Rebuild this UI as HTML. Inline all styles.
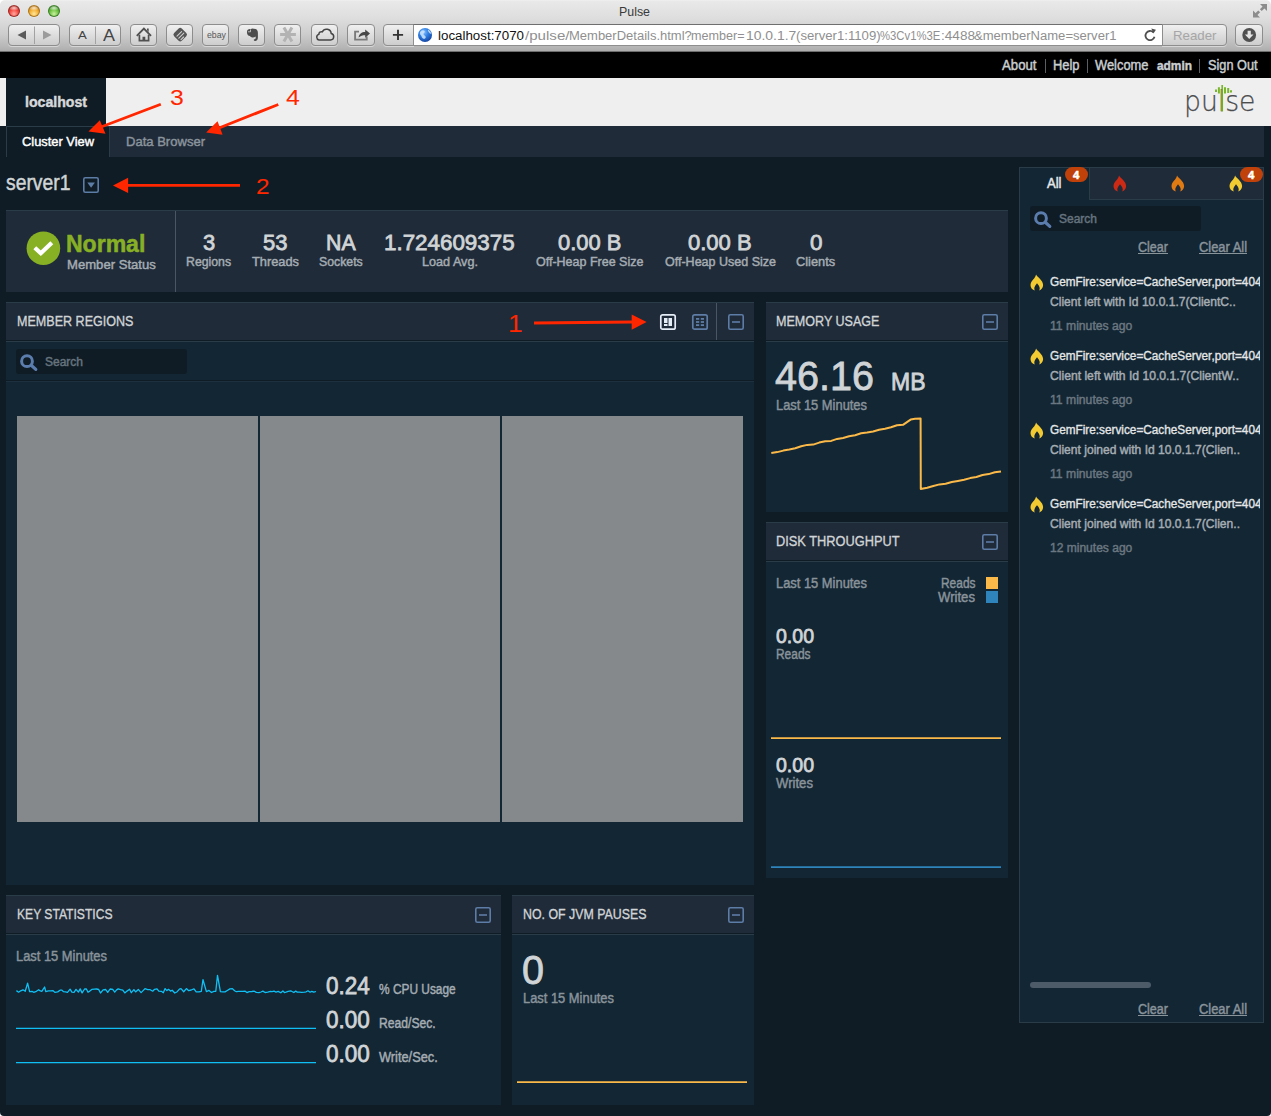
<!DOCTYPE html>
<html lang="en"><head><meta charset="utf-8"><title>Pulse</title>
<style>
html,body{margin:0;padding:0}
body{width:1271px;height:1116px;position:relative;overflow:hidden;background:#0f1c25;font-family:"Liberation Sans",sans-serif}
div,span,svg{position:absolute;box-sizing:border-box}
.t{white-space:nowrap;transform-origin:0 0;display:block}
#chrome{left:0;top:0;width:1271px;height:52px;background:linear-gradient(#f2f2f2 0,#e9e9e9 1px,#dedede 18px,#cdcdcd 34px,#b8b8b8 46px,#adadad 51px,#6e6e6e 51.5px,#555 52px)}
.tl{width:12px;height:12px;border-radius:6px;top:5px}
.btn{top:24px;height:21.5px;border:1px solid #8d8d8d;border-radius:4px;background:linear-gradient(#f0f0f0,#dedede 50%,#cdcdcd);box-shadow:0 1px 0 rgba(255,255,255,.45)}
#url{left:413px;top:24px;width:750px;height:22px;background:#fff;border:1px solid #8e8e8e;border-top-color:#6f6f6f}
#topbar{left:0;top:52px;width:1271px;height:26px;background:#000}
#header{left:0;top:78px;width:1271px;height:48px;background:#efefef}
#hosttab{left:6px;top:78px;width:100px;height:48px;background:#0f1c25}
#nav{left:6px;top:126px;width:1258px;height:31px;background:#202b39}
#navsel{left:6px;top:126px;width:103px;height:31px;background:#0f1c25;border-top:1px solid #2b3c49;border-left:1px solid #2b3c49}
.hd{background:#202b39;border-top:1px solid #2b3c49;height:38px}
.hl{height:1px;background:#2b3c49}
.bd{background:#132634}
.sep{width:1px;background:#4a5663}
.search{background:#0f1c25;border-radius:3px}
.d{-webkit-text-stroke:0.45px currentColor}
.b{-webkit-text-stroke:0.5px currentColor}
.h{-webkit-text-stroke:0.35px currentColor}
#msgclip{left:1040px;top:260px;width:220px;height:320px;overflow:hidden}
.n{-webkit-text-stroke:0.8px currentColor}

</style></head>
<body>
<div id="chrome">
  <div class="tl" style="left:8px;background:radial-gradient(ellipse 55% 28% at 50% 20%,rgba(255,255,255,.75),rgba(255,255,255,0)),radial-gradient(circle at 50% 78%,#ffaaa2 0,#f4493f 48%,#b92a23 82%,#7e1c1c 100%);border:1px solid rgba(130,30,28,.75);box-shadow:0 0.5px 0.5px rgba(255,255,255,.6)"></div>
  <div class="tl" style="left:28px;background:radial-gradient(ellipse 55% 28% at 50% 20%,rgba(255,255,255,.75),rgba(255,255,255,0)),radial-gradient(circle at 50% 78%,#ffe79a 0,#f3ae31 48%,#c07c17 82%,#8a5a12 100%);border:1px solid rgba(150,100,20,.75);box-shadow:0 0.5px 0.5px rgba(255,255,255,.6)"></div>
  <div class="tl" style="left:47.8px;background:radial-gradient(ellipse 55% 28% at 50% 20%,rgba(255,255,255,.75),rgba(255,255,255,0)),radial-gradient(circle at 50% 78%,#c9f0a0 0,#6cc23f 48%,#3f8f27 82%,#2c6a1e 100%);border:1px solid rgba(45,105,30,.75);box-shadow:0 0.5px 0.5px rgba(255,255,255,.6)"></div>
  <div class="btn" style="left:8px;width:52px"></div>
  <div class="btn" style="left:69px;width:52px"></div>
  <div class="btn" style="left:130px;width:27px"></div>
  <div class="btn" style="left:166px;width:27px"></div>
  <div class="btn" style="left:202px;width:27px"></div>
  <div class="btn" style="left:238px;width:27px"></div>
  <div class="btn" style="left:274px;width:27px"></div>
  <div class="btn" style="left:310.500px;width:27.500px"></div>
  <div class="btn" style="left:347px;width:27.500px"></div>
  <div class="btn" style="left:383.400px;width:30.600px;border-radius:4px 0 0 4px"></div>
  <div id="url"></div>
  <div class="btn" style="left:1162px;width:65px;border-radius:0 4px 4px 0"></div>
  <div class="btn" style="left:1235px;width:28px"></div>
  <svg id="chromeicons" style="left:0;top:0" width="1271" height="52" viewBox="0 0 1271 52">
    <path d="M34.500 26.500v17.500M95.500 26.500v17.500" stroke="#a2a2a2" stroke-width="1" fill="none"/>
    <path d="M26 30.500v9l-8.500-4.500z" fill="#5a5a5a"/>
    <path d="M43 30.500v9l8.500-4.500z" fill="#9c9c9c"/>
    <!-- home -->
    <path d="M136.800 35.900L143.900 28.500L151 35.900" stroke="#505050" stroke-width="1.900" fill="none"/>
    <path d="M139.400 34.800V40.700H148.600V34.800" stroke="#505050" stroke-width="1.700" fill="none"/>
    <path d="M147 28.400h1.700v3.600l-1.700-1.700zM142.500 36.700h2.800v4h-2.800z" fill="#505050"/>
    <!-- tag -->
    <rect x="-5.400" y="-5.400" width="10.800" height="10.800" rx="2.200" transform="translate(180.200 34.600) rotate(45)" fill="#555"/>
    <path d="M177 36.200l4.600-4.600M178.800 38.200l5-5M181 39.600l2.600-2.600" stroke="#cfcfcf" stroke-width="1.100" stroke-linecap="round"/>
    <!-- evernote-ish -->
    <path d="M247 31.800C246.800 29.800 248.800 28.800 250.800 29.200L252 28.500L255.600 29C257.200 29.500 257.900 31 257.900 33V37.500C257.900 39.900 256.600 41.100 254.800 40.900C253.500 40.700 253.400 39.300 254.500 39.200C255.700 39.200 255.900 38 255.600 36.400C254 38 251 37.800 250 36C248 36 246.800 34.400 247 31.800Z" fill="#4c4c4c"/>
    <path d="M250.500 29.500v2.300h-2.600" stroke="#d6d6d6" stroke-width="0.800" fill="none"/>
    <!-- asterisk -->
    <path d="M280.100 34.500H295.900M283.900 27.600L291.900 41.400M291.900 27.600L283.900 41.400" stroke="#b3b3b3" stroke-width="3" stroke-linecap="butt"/>
    <!-- cloud -->
    <path d="M319 40h11.600a3.300 3.300 0 0 0 .6-6.500 4.700 4.700 0 0 0-8.900-1.700 2.700 2.700 0 0 0-3.500 2.600 2.900 2.900 0 0 0 .2 5.600z" stroke="#444" stroke-width="1.500" fill="none"/>
    <!-- share -->
    <path d="M359 31.600h-3.900v8h11.600v-3" stroke="#7a7a7a" stroke-width="1.900" fill="none"/>
    <path d="M358.600 37.600c.4-3.600 3-5.600 6.600-5.600v-2.600l4.800 4.200-4.800 4.200v-2.600c-2.600 0-4.600.4-6.600 2.400z" fill="#464646"/>
    <!-- plus -->
    <path d="M398 29.800v10.200M392.900 34.900h10.200" stroke="#333" stroke-width="1.900"/>
    <!-- globe -->
    <defs><radialGradient id="gl" cx="0.4" cy="0.3" r="0.75"><stop offset="0" stop-color="#8cc4ff"/><stop offset="0.45" stop-color="#2f80e4"/><stop offset="1" stop-color="#123f9c"/></radialGradient></defs>
    <circle cx="425" cy="35" r="7" fill="url(#gl)"/>
    <path d="M420.500 31.500c1.500-1.800 3.500-1.500 4.200-.3s-1.500 1.600-1.200 3 2 1 2.200 2.800-1.800 2.200-3 1.200-1-2.200-2-3.200-1-2.500-.2-3.500zM428 29.500c1.500.8 2.800 2.200 3.200 4-.8.500-1.800 0-2.400-1.200s-1.300-1.600-.8-2.800z" fill="#cfe6ff" opacity="0.850"/>
    <!-- reload -->
    <path d="M1153.300 32.300A4.600 4.600 0 1 0 1154.500 36.800" stroke="#4f4f4f" stroke-width="1.800" fill="none"/>
    <path d="M1151.300 28.600l4.600 1.200-2.400 3.800z" fill="#4f4f4f"/>
    <!-- download -->
    <circle cx="1249.200" cy="35" r="6.900" fill="#505050"/>
    <path d="M1247.600 30.800h3.200v3.700h2.700l-4.300 4.400-4.300-4.400h2.700z" fill="#e4e4e4"/>
    <!-- fullscreen -->
    <path d="M1267 4h-7l7 7zM1253 17.500v-7l7 7z" fill="#8c8c8c"/>
    <path d="M1264 7l-3.200 3.200M1256 14.500l3.200-3.200" stroke="#8c8c8c" stroke-width="2.600"/>
  </svg>
</div>
<div id="topbar"></div>
<div id="header"></div>
<div id="hosttab"></div>
<div id="nav"></div>
<div id="navsel"></div>
<div style="left:109px;top:126px;width:1px;height:31px;background:#2b3c49"></div>

<!-- pulse logo bars -->
<svg style="left:1180px;top:82px" width="84" height="40" viewBox="0 0 84 40">
  <path d="M36 7.500v2.500M38.900 5.200v6.300M45 5.200v6.300M48.200 6v5M51 8.200v2.200" stroke="#7ab62c" stroke-width="2" fill="none"/>
  <path d="M42.200 3v26.500" stroke="#7ab62c" stroke-width="1.700" fill="none"/>
</svg>
<div style="left:1045px;top:59px;width:1px;height:14px;background:#5a5f63"></div>
<div style="left:1087px;top:59px;width:1px;height:14px;background:#5a5f63"></div>
<div style="left:1199px;top:59px;width:1px;height:14px;background:#5a5f63"></div>

<!-- server dropdown -->
<svg style="left:83px;top:177px" width="16" height="16" viewBox="0 0 16 16">
  <rect x="0.800" y="0.800" width="14.400" height="14.400" rx="1.500" fill="none" stroke="#5d7ca6" stroke-width="1.600"/>
  <path d="M4.300 5.500h7.600l-3.800 5.200z" fill="#5d7ca6"/>
</svg>

<!-- status block -->
<div id="status" style="left:6px;top:210px;width:1002px;height:82px;background:#202b39;border-top:1px solid #2b3c49"></div>
<div class="sep" style="left:175px;top:211px;height:81px"></div>
<svg style="left:26px;top:231px" width="36" height="36" viewBox="0 0 36 36">
  <circle cx="17.400" cy="17.200" r="16.800" fill="#87b025"/>
  <path d="M8.800 16.700l6 5.500 11-10.500" stroke="#fff" stroke-width="4.200" fill="none" stroke-linejoin="miter"/>
</svg>

<!-- member regions -->
<div class="hd" style="left:6px;top:302px;width:748px"></div>
<div class="hl" style="left:6px;top:341px;width:748px"></div>
<div class="bd" style="left:6px;top:342px;width:748px;height:543px"></div>
<div class="sep" style="left:716px;top:303px;height:37px"></div>
<div class="search" style="left:16px;top:349px;width:171px;height:25px"></div>
<div style="left:6px;top:380px;width:748px;height:1px;background:#0f1c25"></div>
<div style="left:6px;top:381px;width:748px;height:1px;background:#1c3040"></div>
<div id="treemap" style="left:17px;top:416px;width:726px;height:406px;background:#85898c">
  <div style="left:241px;top:0;width:2px;height:406px;background:#132634"></div>
  <div style="left:483px;top:0;width:2px;height:406px;background:#132634"></div>
</div>

<!-- memory usage -->
<div class="hd" style="left:766px;top:302px;width:242px"></div>
<div class="hl" style="left:766px;top:341px;width:242px"></div>
<div class="bd" style="left:766px;top:342px;width:242px;height:170px"></div>

<!-- disk throughput -->
<div class="hd" style="left:766px;top:522px;width:242px"></div>
<div class="hl" style="left:766px;top:561px;width:242px"></div>
<div class="bd" style="left:766px;top:562px;width:242px;height:316px"></div>
<div style="left:986px;top:577px;width:12px;height:12px;background:#fab948"></div>
<div style="left:986px;top:591px;width:12px;height:12px;background:#2e84bb"></div>

<!-- key statistics -->
<div class="hd" style="left:6px;top:895px;width:495px"></div>
<div class="hl" style="left:6px;top:934px;width:495px"></div>
<div class="bd" style="left:6px;top:935px;width:495px;height:170px"></div>

<!-- jvm pauses -->
<div class="hd" style="left:512px;top:895px;width:242px"></div>
<div class="hl" style="left:512px;top:934px;width:242px"></div>
<div class="bd" style="left:512px;top:935px;width:242px;height:170px"></div>

<!-- alerts -->
<div id="alerts" style="left:1019px;top:167px;width:245px;height:856px;background:#132634;border:1px solid #2b3c49"></div>
<div style="left:1089px;top:168px;width:174px;height:32px;background:#202b39;border-left:1px solid #2b3c49;border-bottom:1px solid #2b3c49"></div>
<div class="search" style="left:1030px;top:206px;width:171px;height:25px"></div>
<div style="left:1030px;top:982px;width:121px;height:6px;border-radius:3px;background:#4c5b67"></div>
<div class="badge" style="left:1065px;top:167px;width:23px;height:15px;border-radius:8px;background:#c0410a"></div>
<div class="badge" style="left:1240px;top:167px;width:23px;height:15px;border-radius:8px;background:#c0410a"></div>

<svg id="icons" style="left:0;top:0" width="1271" height="1116" viewBox="0 0 1271 1116">
  <defs>
    <g id="flame"><path d="M5.600 0C6.400 2.600 12.600 5.400 12.600 10.600C12.600 13.400 10.800 15.300 8.700 16C9.700 14.300 9.500 12 6.500 8.800C3.700 11.800 3.300 14.300 4.300 16C2 15.300 0 13.400 0 10.400C0 7.400 2.200 5.800 3.600 4C4.600 2.700 5.300 1.400 5.600 0z"/></g>
    <g id="mag"><circle cx="7" cy="7" r="5.400" fill="none" stroke-width="3"/><path d="M11.200 11l4.600 4.200" stroke-width="3.200" stroke-linecap="round"/></g>
    <g id="minus"><rect x="0.800" y="0.800" width="14.400" height="14.400" rx="1.500" fill="none" stroke-width="1.600"/><path d="M4 8h8" stroke-width="1.600"/></g>
  </defs>
  <!-- annotations -->
  <g stroke="#ff2600" stroke-width="2.800" fill="#ff2600">
    <path d="M160.800 104.200L101 127" fill="none"/><path d="M88.500 131.400L99.800 120.200L105.500 133.800z" stroke="none"/>
    <path d="M278.300 104.500L219 128" fill="none"/><path d="M206.100 132.500L217.500 121.200L222.600 134.800z" stroke="none"/>
    <path d="M240 185.400H127" fill="none"/><path d="M113 185.400L128.100 177.800V192.900z" stroke="none"/>
    <path d="M534 323.100L632 322" fill="none" stroke-width="3"/><path d="M646.600 322L631.700 314.600V329.700z" stroke="none"/>
  </g>
  <!-- header icons -->
  <g transform="translate(660 314)">
    <rect x="0.800" y="0.800" width="14.400" height="14.400" rx="1.800" fill="none" stroke="#e4ecf6" stroke-width="1.700"/>
    <rect x="4" y="4" width="3.500" height="5" fill="#e4ecf6"/><rect x="8.500" y="4" width="3.500" height="8" fill="#e4ecf6"/><rect x="4" y="10" width="3.500" height="2" fill="#e4ecf6"/>
  </g>
  <g transform="translate(692 314)" fill="#5d7ca6">
    <rect x="0.800" y="0.800" width="14.400" height="14.400" rx="1.800" fill="none" stroke="#5d7ca6" stroke-width="1.700"/>
    <rect x="4" y="4" width="3.200" height="1.800"/><rect x="8.800" y="4" width="3.200" height="1.800"/>
    <rect x="4" y="7.100" width="3.200" height="1.800"/><rect x="8.800" y="7.100" width="3.200" height="1.800"/>
    <rect x="4" y="10.200" width="3.200" height="1.800"/><rect x="8.800" y="10.200" width="3.200" height="1.800"/>
  </g>
  <g stroke="#5d7ca6">
    <use href="#minus" x="728" y="314"/>
    <use href="#minus" x="982" y="314"/>
    <use href="#minus" x="982" y="534"/>
    <use href="#minus" x="475" y="907"/>
    <use href="#minus" x="728" y="907"/>
  </g>
  <g stroke="#5b7dae" fill="none">
    <use href="#mag" x="20" y="354.200"/>
    <use href="#mag" x="1034" y="211.200"/>
  </g>
  <!-- flames -->
  <use href="#flame" x="1113.500" y="175.500" fill="#cc2a14"/>
  <use href="#flame" x="1171.500" y="175.500" fill="#e07b14"/>
  <use href="#flame" x="1229.500" y="175.500" fill="#f2cb32"/>
  <use href="#flame" x="1030.500" y="274.500" fill="#f2cb32"/>
  <use href="#flame" x="1030.500" y="348.500" fill="#f2cb32"/>
  <use href="#flame" x="1030.500" y="422.500" fill="#f2cb32"/>
  <use href="#flame" x="1030.500" y="496.500" fill="#f2cb32"/>
  <!-- charts -->
  <path d="M771 738.050H1001M517 1082.050H747" fill="none" stroke="#fab948" stroke-width="1.700"/>
  <path d="M771 867.050H1001" fill="none" stroke="#2e84bb" stroke-width="1.700"/>
  <path id="memline" d="M771.3 453.1L777.3 452.1L783.3 450.6L789.3 449.6L795.2 448.3L801.2 446.3L807.2 444.9L813.2 444.6L819.2 442.6L825.2 441.3L831.2 440.9L837.1 438.9L843.1 438.0L849.1 436.3L855.1 435.2L861.1 433.3L867.1 432.5L873.1 431.5L879.1 429.8L885.0 428.7L891.0 427.3L897.0 425.3L903.0 424.8L910.6 419.6L915.0 418.8L920.6 418.6L920.8 489.0L927.2 487.7L933.3 486.0L939.5 484.4L945.6 483.8L951.8 482.0L957.9 480.9L964.1 479.7L970.2 478.1L976.4 477.0L982.5 475.0L988.7 474.1L994.8 472.3L1001.0 471.4" fill="none" stroke="#fab948" stroke-width="2" stroke-linejoin="round"/>
  <path id="cpuline" d="M16.4 990.6L18.6 992.2L20.7 990.8L23.0 989.8L25.2 991.3L27.6 983.2L29.6 991.6L32.1 991.4L33.7 992.3L36.4 991.3L38.7 989.7L40.3 990.9L41.8 991.3L44.6 987.0L45.8 991.6L48.4 990.9L50.7 990.8L53.1 990.7L54.9 992.4L57.7 991.9L60.1 990.2L61.9 990.1L63.5 991.7L65.5 991.9L67.5 992.3L70.1 989.2L71.9 992.1L74.0 992.3L76.0 989.4L78.4 992.1L80.2 988.9L82.1 992.9L84.6 989.0L86.4 989.0L88.0 992.2L89.8 991.1L91.8 989.4L94.3 989.1L96.6 989.0L98.7 989.5L100.5 993.0L103.1 989.9L105.7 989.5L107.7 992.4L110.1 989.0L112.9 989.5L114.7 992.1L116.6 989.9L118.2 988.9L120.5 989.6L122.8 990.2L124.8 992.9L127.0 991.1L129.6 989.3L131.3 992.7L133.9 989.6L135.6 991.9L138.3 989.4L141.1 992.6L143.3 990.4L145.0 988.7L147.7 989.6L150.2 989.7L152.7 991.2L154.6 989.3L157.0 988.8L158.8 991.1L161.4 991.3L163.3 992.7L165.1 988.6L166.9 990.6L168.5 989.3L170.5 991.1L172.2 990.2L174.8 993.0L177.2 991.7L179.4 989.1L181.0 988.6L183.7 991.7L186.4 988.6L188.7 990.7L191.2 990.0L194.0 988.8L196.2 991.9L198.9 991.9L201.3 991.3L203.0 979.7L206.4 991.6L209.0 990.4L211.5 992.5L213.8 991.4L215.8 991.3L217.5 975.4L220.4 991.6L223.0 991.8L225.0 991.9L227.3 990.5L229.9 988.9L232.4 988.6L234.6 990.7L236.4 991.7L238.6 991.3L241.3 991.3L242.8 991.4L245.2 991.2L246.9 992.6L249.2 991.7L251.9 991.5L254.3 991.2L256.3 992.4L259.0 992.6L261.0 992.0L262.9 991.1L265.1 992.5L267.7 992.2L270.4 991.4L272.1 991.7L274.0 991.2L276.0 992.1L278.2 991.4L280.8 992.8L282.9 990.9L284.4 992.5L286.0 992.2L288.2 991.4L290.7 990.8L292.4 991.7L293.9 992.5L295.7 991.1L297.3 992.1L299.4 992.1L301.7 992.4L304.5 992.2L306.2 991.8L308.0 990.8L310.1 992.2L311.8 991.3L313.8 992.2L316.0 991.5" fill="none" stroke="#10c0f5" stroke-width="1.300" stroke-linejoin="round"/>
  <path d="M16 1028.400H316M16 1062.600H316" fill="none" stroke="#10c0f5" stroke-width="1.300"/>
</svg>

<svg style="left:0;top:1112px" width="4" height="4" viewBox="0 0 4 4"><path d="M0 0A4 4 0 0 0 4 4H0z" fill="#fff"/></svg>
<svg style="left:1267px;top:1112px" width="4" height="4" viewBox="0 0 4 4"><path d="M4 0A4 4 0 0 1 0 4H4z" fill="#fff"/></svg>
<div style="left:1260px;top:262px;width:3px;height:300px;background:#132634;z-index:5"></div>
<svg style="left:0;top:0" width="5" height="5" viewBox="0 0 5 5"><path d="M0 5A5 5 0 0 1 5 0H0z" fill="#fff"/></svg>
<svg style="left:1266px;top:0" width="5" height="5" viewBox="0 0 5 5"><path d="M5 5A5 5 0 0 0 0 0H5z" fill="#fff"/></svg>

<div id="texts">
<span class="t" id="t0" style="left:619.0px;top:5px;font-size:13px;line-height:13px;color:#3a3a3a;transform:scaleX(0.9529);">Pulse</span>
<span class="t" id="t1" style="left:78.3px;top:30px;font-size:11.5px;line-height:11.5px;color:#444;transform:scaleX(1.1470);">A</span>
<span class="t" id="t2" style="left:103.0px;top:28px;font-size:16px;line-height:16px;color:#444;transform:scaleX(1.1245);">A</span>
<span class="t" id="t3" style="left:206.5px;top:30px;font-size:9.5px;line-height:9.5px;color:#585858;transform:scaleX(0.9219);">ebay</span>
<span class="t" id="t4" style="left:438.0px;top:30px;font-size:12.5px;line-height:12.5px;color:#111;transform:scaleX(1.0667);">localhost:7070</span>
<span class="t" id="t5" style="left:524.5px;top:30px;font-size:12.5px;line-height:12.5px;color:#8f8f8f;transform:scaleX(1.2078);">/pulse/</span>
<span class="t" id="t6" style="left:568.7px;top:30px;font-size:12.5px;line-height:12.5px;color:#8f8f8f;transform:scaleX(1.0399);">MemberDetails.html?</span>
<span class="t" id="t7" style="left:691.2px;top:30px;font-size:12.5px;line-height:12.5px;color:#8f8f8f;transform:scaleX(1.0065);">member=</span>
<span class="t" id="t8" style="left:745.5px;top:30px;font-size:12.5px;line-height:12.5px;color:#8f8f8f;transform:scaleX(1.1131);">10.0.1.7</span>
<span class="t" id="t9" style="left:796.0px;top:30px;font-size:12.5px;line-height:12.5px;color:#8f8f8f;transform:scaleX(1.0528);">(server1:1109)</span>
<span class="t" id="t10" style="left:880.4px;top:30px;font-size:12.5px;line-height:12.5px;color:#8f8f8f;transform:scaleX(0.9055);">%3Cv1%3E</span>
<span class="t" id="t11" style="left:940.6px;top:30px;font-size:12.5px;line-height:12.5px;color:#8f8f8f;transform:scaleX(1.0869);">:4488</span>
<span class="t" id="t12" style="left:974.4px;top:30px;font-size:12.5px;line-height:12.5px;color:#8f8f8f;transform:scaleX(1.0440);">&amp;memberName=</span>
<span class="t" id="t13" style="left:1073.2px;top:30px;font-size:12.5px;line-height:12.5px;color:#8f8f8f;transform:scaleX(1.0435);">server1</span>
<span class="t" id="t14" style="left:1172.8px;top:29px;font-size:13px;line-height:13px;color:#a6a6a6;transform:scaleX(1.0202);">Reader</span>
<span class="t d" id="t15" style="left:1001.5px;top:58px;font-size:14px;line-height:14px;color:#c9ced1;transform:scaleX(0.9428);">About</span>
<span class="t d" id="t16" style="left:1052.5px;top:58px;font-size:14px;line-height:14px;color:#c9ced1;transform:scaleX(0.9202);">Help</span>
<span class="t d" id="t17" style="left:1095.0px;top:58px;font-size:14px;line-height:14px;color:#c9ced1;transform:scaleX(0.9209);">Welcome</span>
<span class="t d" id="t18" style="left:1156.5px;top:60px;font-size:12.5px;line-height:12.5px;color:#c9ced1;font-weight:700;transform:scaleX(0.9508);">admin</span>
<span class="t d" id="t19" style="left:1207.5px;top:58px;font-size:14px;line-height:14px;color:#c9ced1;transform:scaleX(0.9085);">Sign Out</span>
<span class="t" id="t20" style="left:1184.0px;top:87px;font-size:29px;line-height:29px;color:#4c4d4f;font-weight:200;transform:scaleX(0.9189);-webkit-text-stroke:0.25px #4c4d4f;font-family:'DejaVu Sans Light','DejaVu Sans',sans-serif;">pu<span style="color:#7ab62c;position:static">l</span>se</span>
<span class="t d" id="t21" style="left:25.0px;top:95px;font-size:14px;line-height:14px;color:#d6d8d9;font-weight:700;transform:scaleX(1.0086);">localhost</span>
<span class="t d" id="t22" style="left:22.0px;top:135px;font-size:13.5px;line-height:13.5px;color:#ffffff;transform:scaleX(0.9532);">Cluster View</span>
<span class="t d" id="t23" style="left:126.0px;top:135px;font-size:13.5px;line-height:13.5px;color:#8a949c;transform:scaleX(0.9660);">Data Browser</span>
<span class="t" id="t24" style="left:169.7px;top:88px;font-size:21.5px;line-height:21.5px;color:#ff2600;transform:scaleX(1.1530);">3</span>
<span class="t" id="t25" style="left:285.7px;top:88px;font-size:21.5px;line-height:21.5px;color:#ff2600;transform:scaleX(1.1530);">4</span>
<span class="t" id="t26" style="left:255.8px;top:177px;font-size:21.5px;line-height:21.5px;color:#ff2600;transform:scaleX(1.1363);">2</span>
<span class="t" id="t27" style="left:508.3px;top:312px;font-size:24px;line-height:24px;color:#ff2600;transform:scaleX(1.1004);">1</span>
<span class="t d" id="t28" style="left:6.0px;top:173px;font-size:21.5px;line-height:21.5px;color:#d0d4d6;transform:scaleX(0.8995);">server1</span>
<span class="t b" id="t29" style="left:66.2px;top:233px;font-size:23px;line-height:23px;color:#87b025;font-weight:700;transform:scaleX(1.0006);">Normal</span>
<span class="t d" id="t30" style="left:66.5px;top:258px;font-size:13.5px;line-height:13.5px;color:#a5adb3;transform:scaleX(0.9700);">Member Status</span>
<span class="t n" id="t31" style="left:202.6px;top:232px;font-size:22.5px;line-height:22.5px;color:#d0d4d6;transform:scaleX(0.9748);">3</span>
<span class="t d" id="t32" style="left:186.4px;top:255px;font-size:13px;line-height:13px;color:#a5adb3;transform:scaleX(0.9454);">Regions</span>
<span class="t n" id="t33" style="left:263.0px;top:232px;font-size:22.5px;line-height:22.5px;color:#d0d4d6;transform:scaleX(0.9788);">53</span>
<span class="t d" id="t34" style="left:252.0px;top:255px;font-size:13px;line-height:13px;color:#a5adb3;transform:scaleX(0.9853);">Threads</span>
<span class="t n" id="t35" style="left:326.4px;top:232px;font-size:22.5px;line-height:22.5px;color:#d0d4d6;transform:scaleX(0.9467);">NA</span>
<span class="t d" id="t36" style="left:319.3px;top:255px;font-size:13px;line-height:13px;color:#a5adb3;transform:scaleX(0.9449);">Sockets</span>
<span class="t n" id="t37" style="left:384.4px;top:232px;font-size:22.5px;line-height:22.5px;color:#d0d4d6;transform:scaleX(0.9940);">1.724609375</span>
<span class="t d" id="t38" style="left:421.5px;top:255px;font-size:13px;line-height:13px;color:#a5adb3;transform:scaleX(0.9706);">Load Avg.</span>
<span class="t n" id="t39" style="left:557.7px;top:232px;font-size:22.5px;line-height:22.5px;color:#d0d4d6;transform:scaleX(0.9744);">0.00 B</span>
<span class="t d" id="t40" style="left:536.1px;top:255px;font-size:13px;line-height:13px;color:#a5adb3;transform:scaleX(0.9609);">Off-Heap Free Size</span>
<span class="t n" id="t41" style="left:687.7px;top:232px;font-size:22.5px;line-height:22.5px;color:#d0d4d6;transform:scaleX(0.9791);">0.00 B</span>
<span class="t d" id="t42" style="left:664.5px;top:255px;font-size:13px;line-height:13px;color:#a5adb3;transform:scaleX(0.9621);">Off-Heap Used Size</span>
<span class="t n" id="t43" style="left:809.5px;top:232px;font-size:22.5px;line-height:22.5px;color:#d0d4d6;transform:scaleX(0.9988);">0</span>
<span class="t d" id="t44" style="left:796.2px;top:255px;font-size:13px;line-height:13px;color:#a5adb3;transform:scaleX(0.9836);">Clients</span>
<span class="t h" id="t45" style="left:16.5px;top:313px;font-size:15px;line-height:15px;color:#d0d4d6;transform:scaleX(0.8370);">MEMBER REGIONS</span>
<span class="t h" id="t46" style="left:776.0px;top:313px;font-size:15px;line-height:15px;color:#d0d4d6;transform:scaleX(0.8371);">MEMORY USAGE</span>
<span class="t h" id="t47" style="left:776.0px;top:533px;font-size:15px;line-height:15px;color:#d0d4d6;transform:scaleX(0.8533);">DISK THROUGHPUT</span>
<span class="t h" id="t48" style="left:16.5px;top:906px;font-size:15px;line-height:15px;color:#d0d4d6;transform:scaleX(0.8069);">KEY STATISTICS</span>
<span class="t h" id="t49" style="left:522.5px;top:906px;font-size:15px;line-height:15px;color:#d0d4d6;transform:scaleX(0.8247);">NO. OF JVM PAUSES</span>
<span class="t d" id="t50" style="left:45.0px;top:356px;font-size:12px;line-height:12px;color:#66737e;transform:scaleX(0.9992);">Search</span>
<span class="t d" id="t51" style="left:1059.0px;top:213px;font-size:12px;line-height:12px;color:#66737e;transform:scaleX(0.9992);">Search</span>
<span class="t n" id="t52" style="left:775.0px;top:355px;font-size:41.5px;line-height:41.5px;color:#d0d4d6;transform:scaleX(0.9532);">46.16</span>
<span class="t n" id="t53" style="left:890.5px;top:371px;font-size:23.5px;line-height:23.5px;color:#d0d4d6;transform:scaleX(0.9787);">MB</span>
<span class="t d" id="t54" style="left:776.3px;top:398px;font-size:14px;line-height:14px;color:#89939a;transform:scaleX(0.9206);">Last 15 Minutes</span>
<span class="t d" id="t55" style="left:776.3px;top:576px;font-size:14px;line-height:14px;color:#89939a;transform:scaleX(0.9206);">Last 15 Minutes</span>
<span class="t d" id="t56" style="left:941.2px;top:576px;font-size:14px;line-height:14px;color:#89939a;transform:scaleX(0.8525);">Reads</span>
<span class="t d" id="t57" style="left:938.2px;top:590px;font-size:14px;line-height:14px;color:#89939a;transform:scaleX(0.9386);">Writes</span>
<span class="t n" id="t58" style="left:776.0px;top:625px;font-size:21px;line-height:21px;color:#d0d4d6;transform:scaleX(0.9297);">0.00</span>
<span class="t d" id="t59" style="left:776.0px;top:647px;font-size:14px;line-height:14px;color:#89939a;transform:scaleX(0.8525);">Reads</span>
<span class="t n" id="t60" style="left:776.0px;top:754px;font-size:21px;line-height:21px;color:#d0d4d6;transform:scaleX(0.9297);">0.00</span>
<span class="t d" id="t61" style="left:776.0px;top:776px;font-size:14px;line-height:14px;color:#89939a;transform:scaleX(0.9386);">Writes</span>
<span class="t d" id="t62" style="left:16.4px;top:949px;font-size:14px;line-height:14px;color:#89939a;transform:scaleX(0.9206);">Last 15 Minutes</span>
<span class="t n" id="t63" style="left:326.0px;top:974px;font-size:24px;line-height:24px;color:#d0d4d6;transform:scaleX(0.9375);">0.24</span>
<span class="t d" id="t64" style="left:378.5px;top:982px;font-size:14px;line-height:14px;color:#a5adb3;transform:scaleX(0.8497);">% CPU Usage</span>
<span class="t n" id="t65" style="left:326.0px;top:1008px;font-size:24px;line-height:24px;color:#d0d4d6;transform:scaleX(0.9375);">0.00</span>
<span class="t d" id="t66" style="left:378.5px;top:1016px;font-size:14px;line-height:14px;color:#a5adb3;transform:scaleX(0.8673);">Read/Sec.</span>
<span class="t n" id="t67" style="left:326.0px;top:1042px;font-size:24px;line-height:24px;color:#d0d4d6;transform:scaleX(0.9375);">0.00</span>
<span class="t d" id="t68" style="left:378.5px;top:1050px;font-size:14px;line-height:14px;color:#a5adb3;transform:scaleX(0.9127);">Write/Sec.</span>
<span class="t n" id="t69" style="left:521.5px;top:950px;font-size:41px;line-height:41px;color:#d0d4d6;transform:scaleX(0.9644);">0</span>
<span class="t d" id="t70" style="left:522.5px;top:991px;font-size:14px;line-height:14px;color:#89939a;transform:scaleX(0.9206);">Last 15 Minutes</span>
<span class="t d" id="t71" style="left:1047.0px;top:176px;font-size:14px;line-height:14px;color:#e6e8e9;transform:scaleX(0.9317);">All</span>
<span class="t d" id="t72" style="left:1073.0px;top:171px;font-size:10px;line-height:10px;color:#fff;font-weight:700;transform:scaleX(1.1326);">4</span>
<span class="t d" id="t73" style="left:1248.2px;top:171px;font-size:10px;line-height:10px;color:#fff;font-weight:700;transform:scaleX(1.1326);">4</span>
<span class="t d" id="t74" style="left:1138.0px;top:240px;font-size:14px;line-height:14px;color:#89939a;transform:scaleX(0.8964);text-decoration:underline;">Clear</span>
<span class="t d" id="t75" style="left:1199.0px;top:240px;font-size:14px;line-height:14px;color:#89939a;transform:scaleX(0.9206);text-decoration:underline;">Clear All</span>
<span class="t d" id="t76" style="left:1138.0px;top:1002px;font-size:14px;line-height:14px;color:#89939a;transform:scaleX(0.8964);text-decoration:underline;">Clear</span>
<span class="t d" id="t77" style="left:1199.0px;top:1002px;font-size:14px;line-height:14px;color:#89939a;transform:scaleX(0.9206);text-decoration:underline;">Clear All</span>
<span class="t h" id="t78" style="left:1050.2px;top:276px;font-size:12.5px;line-height:12.5px;color:#e4e6e7;transform:scaleX(0.9424);">GemFire:service=CacheServer,port=404</span>
<span class="t d" id="t79" style="left:1050.2px;top:296px;font-size:12.5px;line-height:12.5px;color:#a5adb3;transform:scaleX(0.9654);">Client left with Id 10.0.1.7(ClientC..</span>
<span class="t d" id="t80" style="left:1050.2px;top:320px;font-size:12.5px;line-height:12.5px;color:#6b7780;transform:scaleX(0.9734);">11 minutes ago</span>
<span class="t h" id="t81" style="left:1050.2px;top:350px;font-size:12.5px;line-height:12.5px;color:#e4e6e7;transform:scaleX(0.9424);">GemFire:service=CacheServer,port=404</span>
<span class="t d" id="t82" style="left:1050.2px;top:370px;font-size:12.5px;line-height:12.5px;color:#a5adb3;transform:scaleX(0.9716);">Client left with Id 10.0.1.7(ClientW..</span>
<span class="t d" id="t83" style="left:1050.2px;top:394px;font-size:12.5px;line-height:12.5px;color:#6b7780;transform:scaleX(0.9734);">11 minutes ago</span>
<span class="t h" id="t84" style="left:1050.2px;top:424px;font-size:12.5px;line-height:12.5px;color:#e4e6e7;transform:scaleX(0.9424);">GemFire:service=CacheServer,port=404</span>
<span class="t d" id="t85" style="left:1050.2px;top:444px;font-size:12.5px;line-height:12.5px;color:#a5adb3;transform:scaleX(0.9662);">Client joined with Id 10.0.1.7(Clien..</span>
<span class="t d" id="t86" style="left:1050.2px;top:468px;font-size:12.5px;line-height:12.5px;color:#6b7780;transform:scaleX(0.9734);">11 minutes ago</span>
<span class="t h" id="t87" style="left:1050.2px;top:498px;font-size:12.5px;line-height:12.5px;color:#e4e6e7;transform:scaleX(0.9424);">GemFire:service=CacheServer,port=404</span>
<span class="t d" id="t88" style="left:1050.2px;top:518px;font-size:12.5px;line-height:12.5px;color:#a5adb3;transform:scaleX(0.9662);">Client joined with Id 10.0.1.7(Clien..</span>
<span class="t d" id="t89" style="left:1050.2px;top:542px;font-size:12.5px;line-height:12.5px;color:#6b7780;transform:scaleX(0.9627);">12 minutes ago</span>
</div>
</body></html>
